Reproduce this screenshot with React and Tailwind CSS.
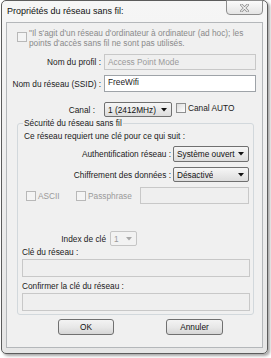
import React from "react";

function Check({ disabled, className = "" }) {
  return (
    <div
      className={`w-[10px] h-[10px] shrink-0 border ${
        disabled ? "border-[#b8b8b8] bg-[#f4f4f4]" : "border-[#8e8f8f] bg-gradient-to-br from-[#dcdcdc] to-[#ffffff]"
      } ${className}`}
    />
  );
}

function Arrow({ disabled }) {
  return (
    <svg width="6" height="4" viewBox="0 0 6 4" className="shrink-0">
      <path d="M0 0 L6 0 L3 3.5 Z" fill={disabled ? "#a8a8a8" : "#111"} />
    </svg>
  );
}

function Select({ w, h, text, disabled, extra = "" }) {
  return (
    <div
      className={`${w} ${h} ${extra} flex items-center justify-between pl-[3px] pr-[4px] rounded-[2px] border overflow-hidden ${
        disabled
          ? "border-[#c5c5c5] bg-[#f2f2f2] text-[#9a9a9a]"
          : "border-[#707070] bg-gradient-to-b from-[#f6f6f6] to-[#dddddd] text-[#111]"
      }`}
    >
      <span className="whitespace-nowrap overflow-hidden">{text}</span>
      <Arrow disabled={disabled} />
    </div>
  );
}

function Button({ label, w }) {
  return (
    <div
      className={`${w} h-[16px] flex items-center justify-center rounded-[3px] border border-[#707070] bg-gradient-to-b from-[#f3f3f3] via-[#e8e8e8] to-[#d6d6d6] text-[#111]`}
    >
      {label}
    </div>
  );
}

export default function App() {
  return (
    <div className="w-[271px] h-[358px] bg-white overflow-hidden font-['Liberation_Sans',Arial,sans-serif] text-[8.3px] leading-[10px] text-[#1a1a1a]">
      <div className="ml-[1px] w-[267px] h-[354px] flex flex-col border border-[#5c5c5c] rounded-[5px] bg-gradient-to-b from-[#f6f6f6] to-[#e6e6e6] shadow-[2px_2px_3px_rgba(0,0,0,0.35)]">
        {/* title bar */}
        <div className="h-[21px] shrink-0 flex items-start justify-between">
          <div className="pl-[5px] pt-[5px] text-[9px] leading-[11px] text-[#111]">
            Propriétés du réseau sans fil:
          </div>
          <div className="mt-[-1px] mr-[4px] w-[37px] h-[15px] flex items-center justify-center rounded-b-[4px] border border-[#8d8d8d] bg-gradient-to-b from-[#fbfbfb] to-[#e4e4e4]">
            <svg width="9" height="8" viewBox="0 0 9 8">
              <path d="M1.5 1 L7.5 7 M7.5 1 L1.5 7" stroke="#8a8a8a" strokeWidth="2.6" strokeLinecap="square" />
              <path d="M1.5 1 L7.5 7 M7.5 1 L1.5 7" stroke="#f4f4f4" strokeWidth="1.1" strokeLinecap="square" />
            </svg>
          </div>
        </div>

        {/* client area */}
        <div className="mx-[4px] h-[326px] shrink-0 border border-[#b4b7ba] bg-[#f0f0f0] flex flex-col">
          {/* ad hoc checkbox */}
          <div className="mt-[6px] ml-[10px] flex items-start gap-[2px]">
            <Check disabled className="mt-[3px]" />
            <div className="text-[#8a8a8a] whitespace-nowrap leading-[9.5px]">
              "Il s'agit d'un réseau d'ordinateur à ordinateur (ad hoc); les
              <br />
              points d'accès sans fil ne sont pas utilisés.
            </div>
          </div>

          {/* profile */}
          <div className="mt-[6px] flex items-center">
            <div className="w-[94px] text-right whitespace-nowrap">Nom du profil :</div>
            <div className="ml-[3px] w-[152px] h-[16px] flex items-center pl-[3px] border border-[#c8c8c8] bg-[#efefef] text-[#9a9a9a]">
              Access Point Mode
            </div>
          </div>

          {/* ssid */}
          <div className="mt-[5px] flex items-center">
            <div className="w-[94px] text-right whitespace-nowrap">Nom du réseau (SSID) :</div>
            <div className="ml-[3px] w-[152px] h-[17px] flex items-start pt-[1px] pl-[3px] border border-[#9ea3a8] bg-white">
              FreeWifi
            </div>
          </div>

          {/* canal */}
          <div className="mt-[10px] flex items-center">
            <div className="w-[94px] pr-[6px] text-right whitespace-nowrap">Canal :</div>
            <Select w="w-[68px]" h="h-[15px]" text="1 (2412MHz)" extra="ml-[3px]" />
            <Check className="ml-[4px] mt-[-3px]" />
            <div className="ml-[2px] mt-[-3px] whitespace-nowrap">Canal AUTO</div>
          </div>

          {/* security group */}
          <fieldset className="mt-[1px] ml-[10px] w-[237px] border border-[#d2d8dc] rounded-[3px] flex flex-col pb-[3px]">
            <legend className="ml-[5px] px-[1px] leading-[10px] whitespace-nowrap">
              Sécurité du réseau sans fil
            </legend>

            <div className="mt-[3px] ml-[6px] whitespace-nowrap">
              Ce réseau requiert une clé pour ce qui suit :
            </div>

            <div className="mt-[5px] flex items-center">
              <div className="w-[153px] text-right whitespace-nowrap">Authentification réseau :</div>
              <Select w="w-[76px]" h="h-[16px]" text="Système ouvert" extra="ml-[2px]" />
            </div>

            <div className="mt-[5px] flex items-center">
              <div className="w-[153px] text-right whitespace-nowrap">Chiffrement des données :</div>
              <Select w="w-[76px]" h="h-[15px]" text="Désactivé" extra="ml-[2px]" />
            </div>

            <div className="mt-[5px] flex items-center text-[#9a9a9a]">
              <Check disabled className="ml-[8px]" />
              <div className="ml-[2px] w-[38px] whitespace-nowrap">ASCII</div>
              <Check disabled />
              <div className="ml-[2px] w-[52px] whitespace-nowrap">Passphrase</div>
              <div className="w-[109px] h-[17px] border border-[#c8c8c8] bg-[#efefef]" />
            </div>

            <div className="mt-[27px] flex items-center">
              <div className="w-[88px] text-right whitespace-nowrap">Index de clé</div>
              <Select w="w-[27px]" h="h-[15px]" text="1" disabled extra="ml-[4px]" />
            </div>

            <div className="mt-[1px] ml-[4px] whitespace-nowrap">Clé du réseau :</div>
            <div className="mt-[2px] ml-[4px] w-[228px] h-[18px] border border-[#c8c8c8] bg-[#efefef]" />

            <div className="mt-[4px] ml-[4px] whitespace-nowrap">Confirmer la clé du réseau :</div>
            <div className="mt-[2px] ml-[4px] w-[228px] h-[18px] border border-[#c8c8c8] bg-[#efefef]" />
          </fieldset>

          {/* buttons */}
          <div className="mt-[4px] flex items-center">
            <div className="ml-[51px]">
              <Button label="OK" w="w-[56px]" />
            </div>
            <div className="ml-[52px]">
              <Button label="Annuler" w="w-[57px]" />
            </div>
          </div>
        </div>
      </div>
    </div>
  );
}
